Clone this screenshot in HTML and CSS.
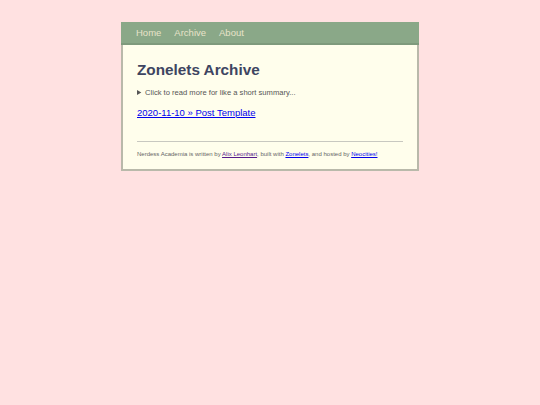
FILE: index.html
```html
<!DOCTYPE html>
<html lang="en">
<head>
    <meta charset="UTF-8">
    <meta name="viewport" content="width=device-width, initial-scale=1.0">
    <title>Zonelets Archive</title>
    <link rel="stylesheet" href="styles.css">
</head>
<body>
    <div id="container">
        <!-- Header nav -->
        <div class="header">
            <ul class="nav">
                <li><a href="#">Home</a></li>
                <li><a href="#">Archive</a></li>
                <li><a href="#">About</a></li>
            </ul>
        </div>

        <div id="content">
            <h1>Zonelets Archive</h1>
            <details>
                <summary>Click to read more for like a short summary...</summary>
            </details>
            <ul class="post-list">
                <li><a href="#">2020-11-10 &raquo; Post Template</a></li>
            </ul>
        </div>

        <!-- Footer -->
        <div class="footer">
            <hr>
            <p>Nerdess Academia is written by <a class="visited" href="#">Alix Leonhart</a>, built with <a href="#">Zonelets</a>, and hosted by <a href="#">Neocities!</a></p>
        </div>
    </div>
</body>
</html>
```

FILE: styles.css
```css
* {
    box-sizing: border-box;
}
body {
    margin: 0;
    padding-top: 22px;
    background-color: #ffe1e1;
    font-family: "Liberation Sans", Arial, sans-serif;
    color: #555;
}
#container {
    width: 298px;
    margin: 0 auto;
    background-color: #fffeec;
    border: 2px solid #b9b9aa;
    border-top: none;
}
/* Header nav */
.header {
    background-color: #8aa888;
    border-bottom: 2px solid #7e9a7c;
    margin: 0 -2px;
    height: 23px;
}
.nav {
    list-style: none;
    margin: 0;
    padding: 0 0 0 15px;
    display: flex;
    gap: 13px;
}
.nav a {
    display: block;
    color: #e8e3c9;
    text-decoration: none;
    font-size: 9.5px;
    line-height: 22px;
}
#content {
    padding: 16px 14px 0;
}
h1 {
    margin: 0 0 9px;
    font-size: 15.3px;
    color: #3e4561;
}
summary {
    font-size: 7.6px;
    color: #555;
    cursor: pointer;
}
.post-list {
    list-style: none;
    margin: 5px 0 0;
    padding: 0;
}
.post-list a {
    font-size: 9.5px;
    color: #0000ee;
}
.footer {
    padding: 21px 14px 12px;
}
.footer hr {
    border: none;
    border-top: 1px solid #c8c8c0;
    margin: 0 0 9px;
}
.footer p {
    margin: 0;
    font-size: 6px;
    color: #666;
}
.footer a {
    color: #0000ee;
}
.footer a.visited {
    color: #551a8b;
}
```
